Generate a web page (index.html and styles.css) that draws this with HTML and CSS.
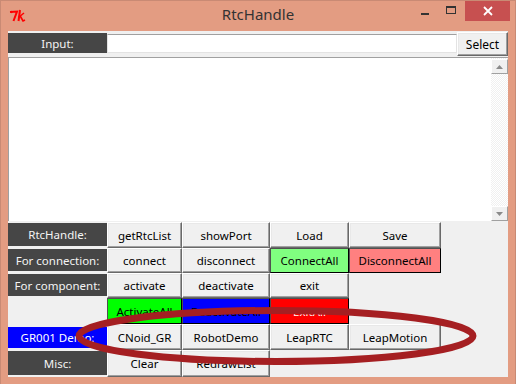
FILE: index.html
```html
<!DOCTYPE html>
<html>
<head>
<meta charset="utf-8">
<title>RtcHandle</title>
<link rel="stylesheet" href="styles.css">
</head>
<body>
<div class="window">
  <div class="titlebar">
    <div class="tb-left">
      <svg class="tk-logo" width="18" height="14" viewBox="0 0 18 14">
        <path d="M1 3 L8 2.5 L4.5 12" fill="none" stroke="#ff0000" stroke-width="2"/>
        <path d="M2 2 L3 4" fill="none" stroke="#ff0000" stroke-width="1.5"/>
        <path d="M11 1 L9.5 12" fill="none" stroke="#ff0000" stroke-width="2"/>
        <path d="M10 8 L15 4 M11.5 7.5 L14 12 L16 11" fill="none" stroke="#ff0000" stroke-width="1.6"/>
      </svg>
    </div>
    <div class="title">RtcHandle</div>
    <div class="controls">
      <div class="ctl min"><span class="min-line"></span></div>
      <div class="ctl max"><span class="max-box"></span></div>
      <div class="ctl close">
        <svg width="10" height="10" viewBox="0 0 10 10"><path d="M1 1 L9 9 M9 1 L1 9" stroke="#fff" stroke-width="1.8"/></svg>
      </div>
    </div>
  </div>

  <div class="client">
    <div class="input-row">
      <div class="label input-label">Input:</div>
      <div class="entry"></div>
      <button class="btn select">Select</button>
    </div>

    <div class="textarea">
      <div class="text"></div>
      <div class="scrollbar">
        <div class="arrow"><svg width="7" height="4" viewBox="0 0 7 4"><path d="M0 4 L3.5 0 L7 4 Z" fill="#8a8a8a"/></svg></div>
        <div class="track"></div>
        <div class="arrow"><svg width="7" height="4" viewBox="0 0 7 4"><path d="M0 0 L3.5 4 L7 0 Z" fill="#8a8a8a"/></svg></div>
      </div>
    </div>

    <div class="grid">
      <div class="label">RtcHandle:</div>
      <button class="btn">getRtcList</button>
      <button class="btn">showPort</button>
      <button class="btn">Load</button>
      <button class="btn">Save</button>

      <div class="label">For connection:</div>
      <button class="btn">connect</button>
      <button class="btn">disconnect</button>
      <button class="btn color lightgreen">ConnectAll</button>
      <button class="btn color lightred">DisconnectAll</button>

      <div class="label">For component:</div>
      <button class="btn">activate</button>
      <button class="btn">deactivate</button>
      <button class="btn">exit</button>
      <div class="empty"></div>

      <div class="empty"></div>
      <button class="btn color green">ActivateAll</button>
      <button class="btn color blue">DeactivateAll</button>
      <button class="btn color red">ExitAll</button>
      <div class="empty"></div>

      <div class="label bluelabel">GR001 Demo:</div>
      <button class="btn">CNoid_GR</button>
      <button class="btn">RobotDemo</button>
      <button class="btn">LeapRTC</button>
      <button class="btn">LeapMotion</button>

      <div class="label">Misc:</div>
      <button class="btn">Clear</button>
      <button class="btn">RedrawList</button>
    </div>
  </div>

  <svg class="annotation" width="516" height="384" viewBox="0 0 516 384">
    <ellipse cx="276" cy="336" rx="197" ry="25.5" fill="none" stroke="#a51f22" stroke-width="7"/>
  </svg>
</div>
</body>
</html>
```

FILE: styles.css
```css
* { box-sizing: border-box; }
html, body { margin: 0; padding: 0; }
body {
  width: 516px;
  height: 384px;
  overflow: hidden;
  background: #e39c82;
  font-family: "Noto Sans", "Open Sans", sans-serif;
  font-size: 11.5px;
  color: #000;
}
.window {
  position: relative;
  width: 516px;
  height: 384px;
  display: flex;
  flex-direction: column;
  background: #e39c82;
  box-shadow: inset 1px 0 0 #c98a74, inset -1px 0 0 #c98a74;
}
.titlebar {
  height: 31px;
  border-top: 1px solid #c98a74;
  display: grid;
  grid-template-columns: 1fr auto 1fr;
  align-items: start;
}
.tb-left { padding: 8px 0 0 9px; }
.tk-logo { display: block; }
.title {
  margin-top: 3px;
  font-size: 15px;
  line-height: 20px;
  color: #333;
}
.controls {
  justify-self: end;
  display: flex;
  margin-right: 6px;
}
.ctl {
  height: 20px;
  display: flex;
  justify-content: center;
  align-items: center;
}
.ctl.min { width: 27px; align-items: flex-end; padding-bottom: 6px; padding-left: 2px; }
.min-line { width: 8px; height: 2px; background: #333; }
.ctl.max { width: 28px; padding-bottom: 2px; }
.max-box { width: 10px; height: 8px; border: 1px solid #333; border-top-width: 2px; }
.ctl.close { width: 45px; background: #c75050; }
.ctl.close svg { display: block; }

.client {
  margin: 0 8px;
  height: 346px;
  background: #f0f0f0;
  display: flex;
  flex-direction: column;
}
.input-row {
  height: 26px;
  display: grid;
  grid-template-columns: 99px 1fr 51px;
  align-items: start;
}
.label {
  background: #464646;
  color: #f4f4f4;
  display: flex;
  justify-content: center;
  align-items: center;
  white-space: nowrap;
}
.input-label { margin-top: 2px; height: 20px; }
.entry {
  margin-top: 3px;
  height: 19px;
  background: #fff;
  border-top: 1px solid #a0a0a0;
  border-left: 1px solid #e3e3e3;
  border-bottom: 1px solid #e3e3e3;
  border-right: 1px solid #e3e3e3;
}
.btn {
  font: inherit;
  color: #000;
  margin: 0;
  padding: 0;
  background: #f0f0f0;
  border: 1px solid;
  border-color: #fff #696969 #696969 #fff;
  box-shadow: inset -1px -1px 0 #a0a0a0, inset 1px 1px 0 #e8e8e8;
  display: flex;
  justify-content: center;
  align-items: center;
  white-space: nowrap;
}
.select { margin-top: 1px; height: 24px; font-size: 12px; }

.textarea {
  height: 164px;
  display: flex;
  background: #fff;
  border-top: 1px solid #a0a0a0;
  border-left: 1px solid #a0a0a0;
}
.text { flex: 1; }
.scrollbar {
  width: 17px;
  display: flex;
  flex-direction: column;
  padding-top: 1px;
  background: repeating-conic-gradient(#ffffff 0 25%, #f0f0f0 0 50%) 0 0 / 2px 2px;
}
.arrow {
  height: 15px;
  background: #f0f0f0;
  border: 1px solid;
  border-color: #fff #a0a0a0 #a0a0a0 #fff;
  display: flex;
  justify-content: center;
  align-items: center;
}
.arrow svg { display: block; }
.track { flex: 1; }

.grid {
  margin-top: 1px;
  display: grid;
  grid-template-columns: 99px 75px 88px 79px 92px;
  grid-template-rows: 26px 25px 25px 26px 26px 27px;
}
.grid .label { margin: 1px 0 2px; }
.grid .bluelabel { background: #0000ff; color: #fff; margin: 3px 0 2px; }
.btn.color {
  border-color: #505050 #000 #000 #505050;
  box-shadow: none;
}
.lightgreen { background: #80ff80; }
.lightred { background: #ff8080; }
.green { background: #00ff00; }
.blue { background: #0000ff; }
.btn.red { background: #ff0000; color: #fff; }

.annotation {
  position: absolute;
  left: 0;
  top: 0;
  pointer-events: none;
}
```
